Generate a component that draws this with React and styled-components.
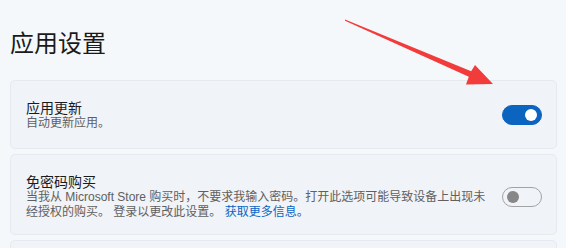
import React from "react";
import styled, { createGlobalStyle } from "styled-components";

const Global = createGlobalStyle`
  html, body { margin: 0; padding: 0; background: #f5f8fb; }
  body { font-family: "Noto Sans", "Noto Sans CJK SC", sans-serif; color: #1b1b1b; }
`;

const Page = styled.div`
  position: relative;
  width: 566px;
  height: 248px;
  overflow: hidden;
  box-sizing: border-box;
  padding: 26px 9px 0 10px;
  background: #f5f8fb;
`;

const Title = styled.h1`
  margin: 0 0 22px 0;
  font-family: "Noto Sans CJK SC", sans-serif;
  font-size: 24px;
  line-height: 32px;
  font-weight: 400;
  color: #1a1a1a;
`;

const List = styled.div`
  display: flex;
  flex-direction: column;
  gap: 5px;
`;

const Card = styled.div`
  display: flex;
  align-items: center;
  justify-content: space-between;
  box-sizing: border-box;
  min-height: ${(p) => p.$h}px;
  padding: ${(p) => p.$pt}px 14px ${(p) => p.$pb}px 15px;
  background: #f0f3f7;
  border: 1px solid #e6e9ed;
  border-radius: 5px;
`;

const Texts = styled.div`
  display: flex;
  flex-direction: column;
`;

const ItemTitle = styled.div`
  font-family: "Liberation Sans", "Noto Sans CJK SC", sans-serif;
  font-size: 14px;
  line-height: 16px;
  color: #1b1b1b;
`;

const ItemDesc = styled.div`
  font-family: "Liberation Sans", "Noto Sans CJK SC", sans-serif;
  font-size: 12px;
  line-height: 15px;
  color: #606060;
`;

const DescLine = styled.div`
  white-space: nowrap;
`;

const Link = styled.span`
  color: #0a64c2;
`;

const Toggle = styled.div`
  position: relative;
  flex: none;
  width: 40px;
  height: 20px;
  box-sizing: border-box;
  border-radius: 10px;
  background: ${(p) => (p.$on ? "#0a64c0" : "transparent")};
  border: 1px solid ${(p) => (p.$on ? "#0a64c0" : "#a3a3a3")};
`;

const Knob = styled.span`
  position: absolute;
  top: 3px;
  ${(p) => (p.$on ? "right: 4px;" : "left: 4px;")}
  width: 12px;
  height: 12px;
  border-radius: 50%;
  background: ${(p) => (p.$on ? "#ffffff" : "#878787")};
`;

const Arrow = styled.svg`
  position: absolute;
  left: 0;
  top: 0;
  pointer-events: none;
`;

export default function App() {
  return (
    <>
      <Global />
      <Page>
        <Title>应用设置</Title>
        <List>
          <Card $h={69} $pt={18} $pb={17}>
            <Texts>
              <ItemTitle>应用更新</ItemTitle>
              <ItemDesc>自动更新应用。</ItemDesc>
            </Texts>
            <Toggle $on>
              <Knob $on />
            </Toggle>
          </Card>
          <Card $h={81} $pt={18} $pb={13}>
            <Texts>
              <ItemTitle>免密码购买</ItemTitle>
              <ItemDesc>
                <DescLine>当我从 Microsoft Store 购买时，不要求我输入密码。打开此选项可能导致设备上出现未</DescLine>
                <DescLine>
                  经授权的购买。 登录以更改此设置。 <Link>获取更多信息。</Link>
                </DescLine>
              </ItemDesc>
            </Texts>
            <Toggle>
              <Knob />
            </Toggle>
          </Card>
          <Card $h={40} $pt={0} $pb={0} />
        </List>
        <Arrow width="566" height="248" viewBox="0 0 566 248">
          <polygon
            points="345,19.5 471.2,71.2 475,65 493,84 466,84.5 468.8,76.8 345,20.8"
            fill="#f23b3b"
          />
        </Arrow>
      </Page>
    </>
  );
}
